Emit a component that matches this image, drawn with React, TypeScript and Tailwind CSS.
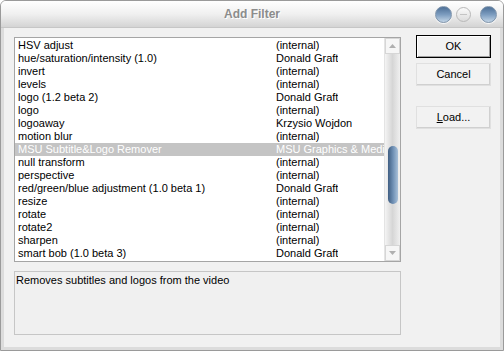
import React from 'react';

const rows: [string, string][] = [
  ['HSV adjust', '(internal)'],
  ['hue/saturation/intensity (1.0)', 'Donald Graft'],
  ['invert', '(internal)'],
  ['levels', '(internal)'],
  ['logo (1.2 beta 2)', 'Donald Graft'],
  ['logo', '(internal)'],
  ['logoaway', 'Krzysio Wojdon'],
  ['motion blur', '(internal)'],
  ['MSU Subtitle&Logo Remover', 'MSU Graphics & Media Lab'],
  ['null transform', '(internal)'],
  ['perspective', '(internal)'],
  ['red/green/blue adjustment (1.0 beta 1)', 'Donald Graft'],
  ['resize', '(internal)'],
  ['rotate', '(internal)'],
  ['rotate2', '(internal)'],
  ['sharpen', '(internal)'],
  ['smart bob (1.0 beta 3)', 'Donald Graft'],
];

const SELECTED = 8;

const Orb = ({ hollow }: { hollow?: boolean }) =>
  hollow ? (
    <div className="w-[15px] h-[15px] rounded-full border border-[#b8b8b8] bg-gradient-to-b from-[#fafafa] to-[#dcdcdc] flex items-center justify-center">
      <div className="w-[7px] h-[1px] bg-[#c4c4c4]" />
    </div>
  ) : (
    <div className="w-[17px] h-[17px] rounded-full border border-[#7f94ab] bg-gradient-to-b from-[#4d6f96] via-[#7c9cbf] to-[#c3d5e6] shadow-[0_1px_1px_rgba(255,255,255,0.9)]" />
  );

const Btn = ({ children, def }: { children: React.ReactNode; def?: boolean }) => (
  <div
    className={`w-[75px] h-[23px] flex items-center justify-center bg-[#f2f2f2] text-[11px] text-black ${
      def ? 'border border-black shadow-[inset_1px_1px_0_#fff,inset_-1px_-1px_0_#a0a0a0]' : 'border border-[#e0e0e0] shadow-[inset_-1px_-1px_0_#d0d0d0]'
    }`}
  >
    {children}
  </div>
);

export default function App() {
  return (
    <div
      className="w-[504px] h-[351px] flex flex-col bg-[#f1f1f1] border border-[#9a9a9a] rounded-t-[6px] overflow-hidden"
      style={{ fontFamily: '"Liberation Sans", Arial, sans-serif' }}
    >
      <div className="relative h-[27px] shrink-0 bg-gradient-to-b from-[#ffffff] via-[#f0f0f0] to-[#d4d4d4] border-b border-[#c6c6c6] flex items-center justify-center">
        <span className="text-[12px] font-bold text-[#8c8c8c] [text-shadow:1px_1px_0_#ffffff]">Add Filter</span>
        <div className="absolute right-[6px] top-[5px] flex items-center">
          <Orb />
          <div className="ml-[4px]">
            <Orb hollow />
          </div>
          <div className="ml-[9px]">
            <Orb />
          </div>
        </div>
      </div>

      <div className="flex-1 flex border-x-[3px] border-b-[3px] border-[#dcdcdc] pl-[10px] pt-[9px]">
        <div className="w-[387px] flex flex-col">
          <div className="h-[225px] flex border border-[#a5a5a5] bg-white">
            <div className="flex-1 pt-[1px] overflow-hidden">
              {rows.map(([name, author], i) => (
                <div
                  key={i}
                  className={`h-[13px] flex items-center text-[11px] leading-[13px] whitespace-nowrap ${
                    i === SELECTED ? 'bg-[#c4c4c4] text-white' : 'text-black'
                  }`}
                >
                  <span className="w-[261px] pl-[3px] shrink-0 overflow-hidden">{name}</span>
                  <span className="overflow-hidden">{author}</span>
                </div>
              ))}
            </div>
            <div className="w-[16px] flex flex-col bg-gradient-to-r from-[#f4f4f4] via-[#d6d6d6] to-[#f0f0f0] border-l border-[#e4e4e4]">
              <div className="h-[16px] flex items-center justify-center bg-[#f6f6f6] border border-[#d6d6d6]">
                <svg width="9" height="6" viewBox="0 0 9 6">
                  <path d="M1 5 L4.5 1 L8 5 Z" fill="#b0b0b0" />
                </svg>
              </div>
              <div className="flex-1 pt-[92px]">
                <div className="mx-auto w-[10px] h-[58px] rounded-[5px] bg-gradient-to-r from-[#3f5e82] via-[#6e8fb4] to-[#a8c0d9]" />
              </div>
              <div className="h-[16px] flex items-center justify-center bg-[#f6f6f6] border border-[#d6d6d6]">
                <svg width="9" height="6" viewBox="0 0 9 6">
                  <path d="M1 1 L4.5 5 L8 1 Z" fill="#b0b0b0" />
                </svg>
              </div>
            </div>
          </div>
          <div className="mt-[9px] h-[64px] border border-[#c6c6c6] bg-[#f0f0f0] px-[1px] pt-[0px] text-[11px] text-black">
            Removes subtitles and logos from the video
          </div>
        </div>

        <div className="ml-[15px] -mt-[2px] flex flex-col">
          <Btn def>OK</Btn>
          <div className="mt-[5px]">
            <Btn>Cancel</Btn>
          </div>
          <div className="mt-[20px]">
            <Btn>
              <span>
                <span className="underline">L</span>oad...
              </span>
            </Btn>
          </div>
        </div>
      </div>
    </div>
  );
}
